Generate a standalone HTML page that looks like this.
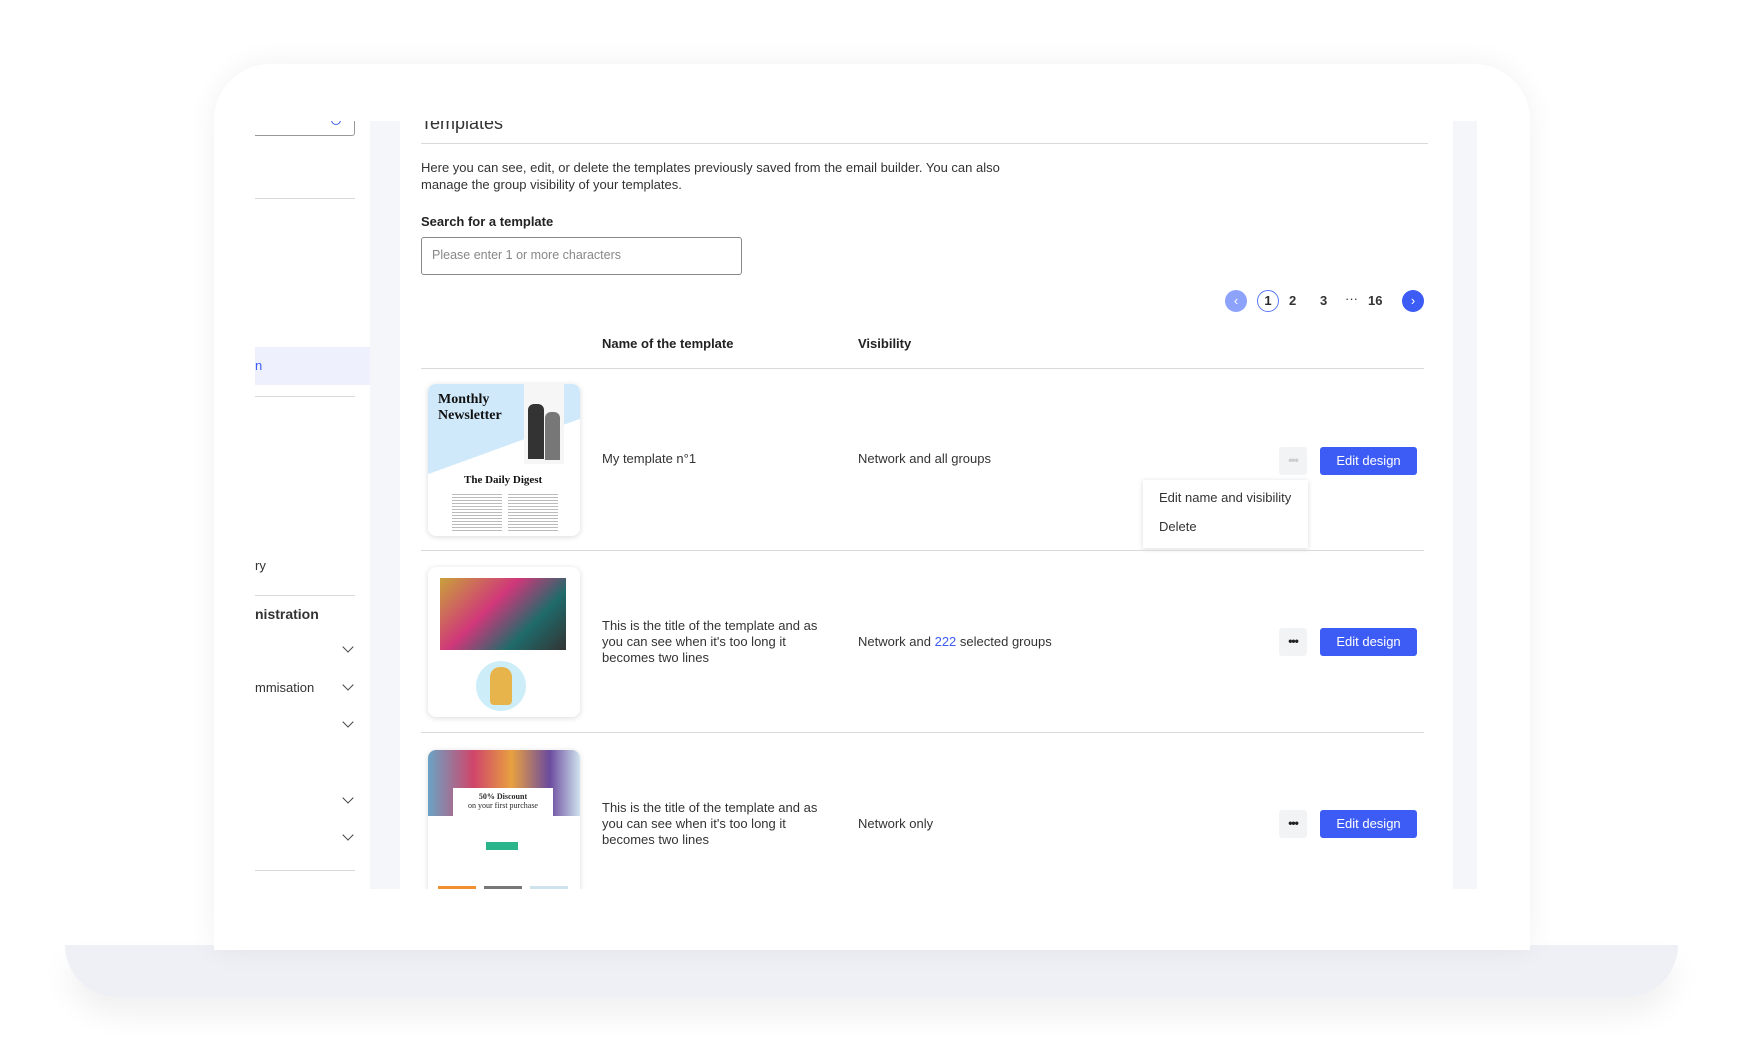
<!DOCTYPE html>
<html><head><meta charset="utf-8"><style>
*{box-sizing:border-box;margin:0;padding:0}
body{width:1742px;height:1058px;background:#fff;font-family:"Liberation Sans",sans-serif;position:relative;overflow:hidden;color:#2b2b2b}
.a{position:absolute}
.base{left:65px;top:945px;width:1613px;height:52px;background:#eef0f5;border-radius:0 0 60px 60px;box-shadow:0 18px 30px rgba(0,0,0,.06)}
.frame{left:214px;top:64px;width:1316px;height:886px;background:#fff;border-radius:56px 56px 0 0;box-shadow:0 0 30px rgba(0,0,0,.06)}
.screen{left:255px;top:121px;width:1222px;height:768px;background:#f5f6fa;overflow:hidden}
.side{left:0;top:0;width:115px;height:768px;background:#fff}
.main{left:145px;top:0;width:1053px;height:768px;background:#fff}
.hr{height:1px;background:#d9d9d9}
.t{font-size:13px;color:#333;white-space:nowrap}
.chev{width:8px;height:8px;border-right:1.5px solid #444;border-bottom:1.5px solid #444;transform:rotate(45deg)}
.btn{width:97px;height:28px;background:#3d5cf5;border-radius:3px;color:#fff;font-size:13px;text-align:center;line-height:28px}
.dots{width:28px;height:28px;background:#f2f3f5;border-radius:3px;text-align:center;line-height:26px;font-size:12px;font-weight:bold;color:#222;letter-spacing:-1px}
.thumb{width:152px;border-radius:8px;box-shadow:0 1px 6px rgba(0,0,0,.15);background:#fff;overflow:hidden}
</style></head><body>
<div class="a base"></div>
<div class="a frame"></div>
<div class="a screen">
 <div class="a side">
  <div class="a" style="left:0;top:0;width:100px;height:15px;border-right:1px solid #999;border-bottom:1px solid #999;border-radius:0 0 3px 0"></div>
  <div class="a" style="left:76px;top:-6px;width:10px;height:10px;border:1.5px solid #3d5cf5;border-radius:50%"></div>
  <div class="a hr" style="left:0;top:77px;width:100px"></div>
  <div class="a" style="left:0;top:226px;width:115px;height:38px;background:#eef1fd"></div>
  <div class="a t" style="left:0;top:237px;color:#3d5cf5">n</div>
  <div class="a hr" style="left:0;top:275px;width:100px"></div>
  <div class="a t" style="left:0;top:437px">ry</div>
  <div class="a hr" style="left:0;top:474px;width:100px"></div>
  <div class="a t" style="left:0;top:485px;font-weight:bold;font-size:14px">nistration</div>
  <div class="a chev" style="left:89px;top:522px"></div>
  <div class="a t" style="left:0;top:559px">mmisation</div>
  <div class="a chev" style="left:89px;top:560px"></div>
  <div class="a chev" style="left:89px;top:597px"></div>
  <div class="a chev" style="left:89px;top:673px"></div>
  <div class="a chev" style="left:89px;top:710px"></div>
  <div class="a hr" style="left:0;top:749px;width:100px"></div>
 </div>
 <div class="a main">
  <div class="a" style="left:21px;top:-8px;font-size:18px;color:#333">Templates</div>
  <div class="a hr" style="left:21px;top:22px;width:1007px"></div>
  <div class="a t" style="left:21px;top:38px;line-height:17px">Here you can see, edit, or delete the templates previously saved from the email builder. You can also<br>manage the group visibility of your templates.</div>
  <div class="a t" style="left:21px;top:93px;font-weight:bold;color:#222">Search for a template</div>
  <div class="a" style="left:21px;top:116px;width:321px;height:38px;border:1px solid #888;border-radius:3px"></div>
  <div class="a t" style="left:32px;top:127px;color:#888;font-size:12.5px">Please enter 1 or more characters</div>
  <div class="a" style="left:825px;top:169px;width:22px;height:22px;border-radius:50%;background:#8da2fb;color:#fff;text-align:center;line-height:21px;font-size:13px">‹</div>
  <div class="a" style="left:857px;top:169px;width:22px;height:22px;border-radius:50%;border:1.5px solid #5b78f5;text-align:center;line-height:19px;font-size:13px;font-weight:bold">1</div>
  <div class="a t" style="left:889px;top:172px;font-weight:bold">2</div>
  <div class="a t" style="left:920px;top:172px;font-weight:bold">3</div>
  <div class="a t" style="left:945px;top:170px">···</div>
  <div class="a t" style="left:968px;top:172px;font-weight:bold">16</div>
  <div class="a" style="left:1002px;top:169px;width:22px;height:22px;border-radius:50%;background:#3d5cf5;color:#fff;text-align:center;line-height:21px;font-size:13px">›</div>
  <div class="a t" style="left:202px;top:215px;font-weight:bold;color:#222">Name of the template</div>
  <div class="a t" style="left:458px;top:215px;font-weight:bold;color:#222">Visibility</div>
  <div class="a hr" style="left:21px;top:247px;width:1003px"></div>
  <!-- row1 -->
  <div class="a thumb" style="left:28px;top:263px;height:152px">
   <div class="a" style="left:0;top:0;width:152px;height:95px;background:linear-gradient(160deg,#cfe9fb 60%,#fff 60%)"></div>
   <div class="a" style="left:96px;top:0;width:40px;height:80px;background:#f6f6f6"></div>
   <div class="a" style="left:100px;top:20px;width:16px;height:55px;background:#333;border-radius:6px 6px 0 0"></div>
   <div class="a" style="left:117px;top:28px;width:15px;height:48px;background:#777;border-radius:6px 6px 0 0"></div>
   <div class="a" style="left:10px;top:8px;font-family:'Liberation Serif',serif;font-weight:bold;font-size:14px;line-height:16px;color:#111">Monthly<br>Newsletter</div>
   <div class="a" style="left:36px;top:90px;font-family:'Liberation Serif',serif;font-weight:bold;font-size:11px;color:#111">The Daily Digest</div>
   <div class="a" style="left:24px;top:108px;width:50px;height:40px;background:repeating-linear-gradient(#fff 0 2px,#bbb 2px 3px)"></div>
   <div class="a" style="left:80px;top:108px;width:50px;height:40px;background:repeating-linear-gradient(#fff 0 2px,#bbb 2px 3px)"></div>
  </div>
  <div class="a t" style="left:202px;top:330px">My template n°1</div>
  <div class="a t" style="left:458px;top:330px">Network and all groups</div>
  <div class="a dots" style="left:879px;top:326px;color:#ccc">•••</div>
  <div class="a btn" style="left:920px;top:326px">Edit design</div>
  <div class="a" style="left:743px;top:359px;width:165px;height:68px;background:#fff;box-shadow:0 1px 5px rgba(0,0,0,.15)"></div>
  <div class="a t" style="left:759px;top:369px">Edit name and visibility</div>
  <div class="a t" style="left:759px;top:398px">Delete</div>
  <div class="a hr" style="left:21px;top:429px;width:1003px"></div>
  <!-- row2 -->
  <div class="a thumb" style="left:28px;top:446px;height:150px">
   <div class="a" style="left:12px;top:11px;width:126px;height:72px;background:linear-gradient(135deg,#c9a13a,#d0377a 40%,#1f6b6b 70%,#333)"></div>
   <div class="a" style="left:48px;top:94px;width:50px;height:50px;border-radius:50%;background:#cdeef8"></div>
   <div class="a" style="left:62px;top:100px;width:22px;height:38px;background:#e6b44a;border-radius:10px 10px 4px 4px"></div>
  </div>
  <div class="a t" style="left:202px;top:497px;line-height:16px">This is the title of the template and as<br>you can see when it's too long it<br>becomes two lines</div>
  <div class="a t" style="left:458px;top:513px">Network and <span style="color:#3d5cf5">222</span> selected groups</div>
  <div class="a dots" style="left:879px;top:507px">•••</div>
  <div class="a btn" style="left:920px;top:507px">Edit design</div>
  <div class="a hr" style="left:21px;top:611px;width:1003px"></div>
  <!-- row3 -->
  <div class="a thumb" style="left:28px;top:629px;height:160px">
   <div class="a" style="left:0;top:0;width:152px;height:66px;background:linear-gradient(90deg,#6aa3c4,#d0456a 30%,#e8a040 55%,#6b4b9e 80%,#cfe3ee)"></div>
   <div class="a" style="left:25px;top:38px;width:100px;height:60px;background:#fff"></div>
   <div class="a" style="left:40px;top:42px;font-family:'Liberation Serif',serif;font-size:8px;font-weight:bold;width:70px;text-align:center">50% Discount<br><span style="font-weight:normal">on your first purchase</span></div>
   <div class="a" style="left:58px;top:92px;width:32px;height:8px;background:#2bb58c"></div>
   <div class="a" style="left:10px;top:136px;width:38px;height:10px;background:#f0902e"></div>
   <div class="a" style="left:56px;top:136px;width:38px;height:10px;background:#777"></div>
   <div class="a" style="left:102px;top:136px;width:38px;height:10px;background:#cfe3ee"></div>
  </div>
  <div class="a t" style="left:202px;top:679px;line-height:16px">This is the title of the template and as<br>you can see when it's too long it<br>becomes two lines</div>
  <div class="a t" style="left:458px;top:695px">Network only</div>
  <div class="a dots" style="left:879px;top:689px">•••</div>
  <div class="a btn" style="left:920px;top:689px">Edit design</div>
 </div>
</div>
</body></html>
